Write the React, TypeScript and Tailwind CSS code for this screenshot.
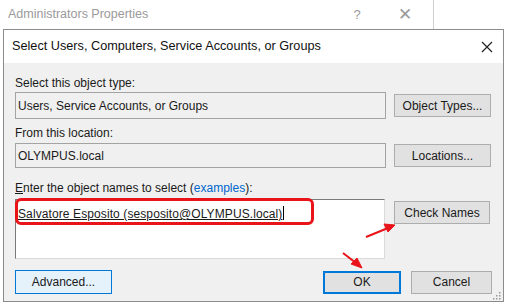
import React from "react";

// Windows "Select Users" picker dialog, opened over the group properties window.

const font = { fontFamily: '"Liberation Sans", Arial, sans-serif' };

function WinButton({
  children,
  className = "",
}: {
  children: React.ReactNode;
  className?: string;
}) {
  return (
    <div
      className={`flex items-center justify-center border border-[#adadad] bg-[#e1e1e1] text-[12px] text-[#1a1a1a] ${className}`}
    >
      {children}
    </div>
  );
}

export default function App() {
  return (
    <div
      className="relative h-[305px] w-[509px] overflow-hidden bg-white"
      style={font}
    >
      {/* parent window title bar */}
      <div className="flex h-[29px] items-center">
        <div className="w-[346px] pl-[8px] text-[12.5px] text-[#9a9a9a]">
          Administrators Properties
        </div>
        <div className="w-[22px] text-center text-[13px] text-[#9a9a9a]">?</div>
        <div className="ml-[26px] w-[22px] text-center text-[17px] font-light text-[#9a9a9a]">✕</div>
        <div className="ml-[17px] h-full w-px bg-[#cfcfcf]" />
      </div>

      {/* dialog */}
      <div className="ml-[3px] flex h-[273px] w-[501px] flex-col border border-[#8c8c8c] bg-[#f0f0f0]">
        <div className="flex h-[33px] shrink-0 items-center justify-between bg-white pl-[8px] pr-[10px]">
          <span className="text-[12.7px] text-[#111]">
            Select Users, Computers, Service Accounts, or Groups
          </span>
          <svg width="12" height="12" viewBox="0 0 12 12">
            <path d="M1 1 L11 11 M11 1 L1 11" stroke="#222" strokeWidth="1.2" />
          </svg>
        </div>

        <div className="flex flex-col pl-[11px] pr-[11px] pt-[13px] text-[12px] text-[#1a1a1a]">
          <div className="h-[14px] leading-[14px]">Select this object type:</div>
          <div className="mt-[2px] flex items-center gap-[8px]">
            <div className="flex h-[27px] w-[371px] items-center border border-[#a3a3a3] pl-[2px]">
              Users, Service Accounts, or Groups
            </div>
            <WinButton className="h-[23px] w-[97px]">Object Types...</WinButton>
          </div>

          <div className="mt-[7px] h-[14px] leading-[14px]">From this location:</div>
          <div className="mt-[3px] flex items-center gap-[8px]">
            <div className="flex h-[25px] w-[371px] items-center border border-[#a3a3a3] pl-[2px]">
              OLYMPUS.local
            </div>
            <WinButton className="h-[23px] w-[97px]">Locations...</WinButton>
          </div>

          <div className="mt-[13px] h-[14px] leading-[14px]">
            <span className="underline">E</span>nter the object names to select (
            <span className="text-[#0066cc]">examples</span>):
          </div>
          <div className="mt-[4px] flex items-start gap-[8px]">
            <div className="h-[60px] w-[370px] border border-[#7a7a7a] border-b-[#dadada] border-r-[#dadada] bg-white pl-[2px] pt-[4px]">
              <span className="underline tracking-[0.1px]">
                Salvatore Esposito (sesposito@OLYMPUS.local)
              </span>
              <span className="ml-px inline-block h-[14px] w-px translate-y-[2px] bg-black" />
            </div>
            <WinButton className="mt-[2px] ml-px h-[23px] w-[96px]">Check Names</WinButton>
          </div>

          <div className="mt-[11px] flex items-center">
            <div className="flex h-[24px] w-[97px] items-center justify-center border border-[#0078d7] bg-[#e5f1fb]">
              Advanced...
            </div>
            <div className="ml-auto flex gap-[10px]">
              <div className="flex h-[23px] w-[78px] items-center justify-center border-2 border-[#0078d7] bg-[#e1e1e1]">
                OK
              </div>
              <WinButton className="h-[23px] w-[81px]">Cancel</WinButton>
            </div>
          </div>
        </div>
      </div>

      {/* resize gripper */}
      <svg className="absolute left-[491px] top-[290px]" width="10" height="10" viewBox="0 0 10 10">
        {[
          [8, 2],
          [5, 5],
          [8, 5],
          [2, 8],
          [5, 8],
          [8, 8],
        ].map(([x, y], i) => (
          <rect key={i} x={x} y={y} width="1.5" height="1.5" fill="#9a9a9a" />
        ))}
      </svg>

      {/* red annotations */}
      <div className="pointer-events-none absolute left-[15px] top-[198px] h-[27px] w-[299px] rounded-[6px] border-[3px] border-[#e8141a]" />
      <svg className="pointer-events-none absolute left-0 top-0" width="509" height="305">
        <g fill="#e8141a" stroke="#e8141a">
          <line x1="366" y1="237" x2="388" y2="228" strokeWidth="2" />
          <polygon points="395,225 384,224 388,232" />
          <line x1="343" y1="253" x2="356" y2="263" strokeWidth="2" />
          <polygon points="362,268 351,264 357,258" />
        </g>
      </svg>
    </div>
  );
}
